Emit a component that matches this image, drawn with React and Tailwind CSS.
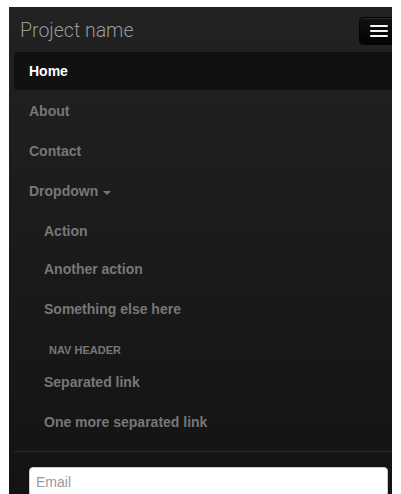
export default function App() {
  const link = "block px-[15px] py-[9px] text-[14px] leading-[20px] font-bold text-[#777] rounded-[3px]";
  return (
    <div className="h-[494px] w-[401px] overflow-hidden bg-white pl-[9px] pt-[7px]" style={{ fontFamily: '"Liberation Sans", Arial, sans-serif' }}>
      <div className="h-[487px] w-[383px] overflow-hidden bg-gradient-to-b from-[#222222] to-[#131313]">
        <div className="w-[390px]">
          <div className="flex h-[45px] items-start justify-between">
            <div className="pl-[11px] pt-[14px] text-[19.5px] leading-[20px] font-light text-[#999]" style={{ fontFamily: 'Roboto, "Liberation Sans", sans-serif' }}>
              Project name
            </div>
            <button className="mt-[10px] flex flex-col gap-[3px] rounded-[4px] border border-[#040404] bg-gradient-to-b from-[#111] to-[#040404] px-[10px] py-[7px] shadow-[inset_0_1px_0_rgba(255,255,255,0.1)]">
              <span className="block h-[2px] w-[18px] rounded-[1px] bg-[#f5f5f5]"></span>
              <span className="block h-[2px] w-[18px] rounded-[1px] bg-[#f5f5f5]"></span>
              <span className="block h-[2px] w-[18px] rounded-[1px] bg-[#f5f5f5]"></span>
            </button>
          </div>
          <ul className="mx-[5px]">
            <li className="mb-[2px]">
              <a className="block px-[15px] py-[9px] text-[14px] leading-[20px] font-bold text-white rounded-[3px] bg-[#111]">Home</a>
            </li>
            <li className="mb-[2px]"><a className={link}>About</a></li>
            <li className="mb-[2px]"><a className={link}>Contact</a></li>
            <li className="mb-[2px]">
              <a className={link}>
                Dropdown
                <span className="ml-[5px] mt-[10px] inline-block h-0 w-0 border-x-[4px] border-t-[4px] border-x-transparent border-t-[#777] align-top"></span>
              </a>
            </li>
            <li>
              <ul className="mx-[15px]">
                <li><a className={link}>Action</a></li>
                <li className="mb-[2px]"><a className={link}>Another action</a></li>
                <li className="mb-[2px]"><a className={link}>Something else here</a></li>
                <li className="mt-[9px] px-[20px] py-[3px] text-[11px] leading-[20px] font-bold uppercase text-[#777]">Nav header</li>
                <li className="mb-[2px]"><a className={link}>Separated link</a></li>
                <li className="mb-[2px]"><a className={link}>One more separated link</a></li>
              </ul>
            </li>
          </ul>
          <div className="mt-[10px] ml-[5px] border-t border-[#2e2e2e] px-[15px] pt-[15px]">
            <input
              type="text"
              placeholder="Email"
              className="box-border h-[30px] w-[359px] rounded-[4px] border border-[#ccc] bg-white px-[6px] py-[4px] text-[14px] leading-[20px] text-[#555] placeholder:text-[#999] outline-none"
            />
          </div>
        </div>
      </div>
    </div>
  );
}
